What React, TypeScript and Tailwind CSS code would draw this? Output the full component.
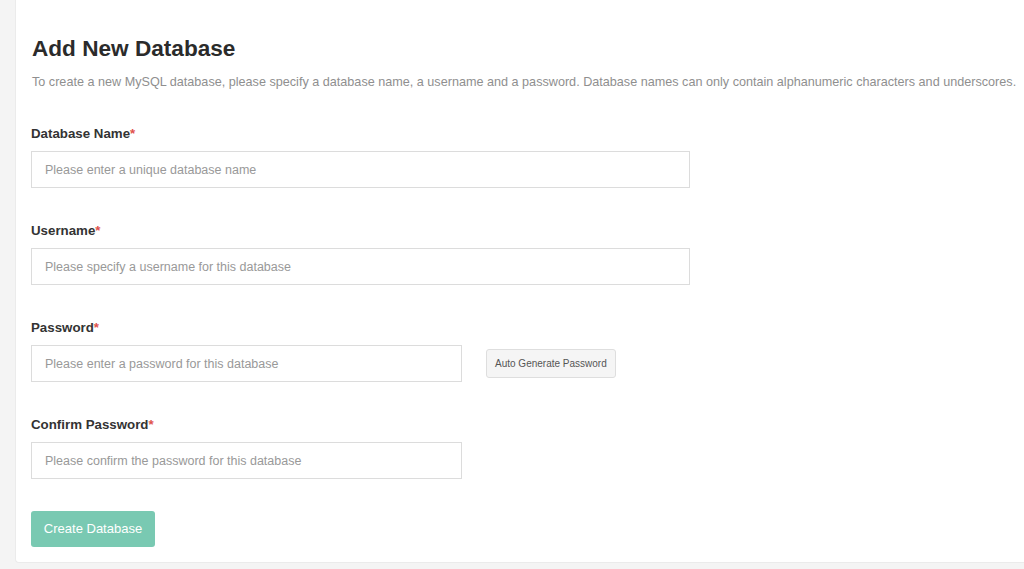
import React from 'react';

const font = { fontFamily: '"Liberation Sans", Arial, sans-serif' };

function Field({ label, placeholder, wide = true, extra }: { label: string; placeholder: string; wide?: boolean; extra?: React.ReactNode }) {
  return (
    <div className="mb-[34px]">
      <label className="block text-[13.3px] font-bold text-[#333] leading-[18px] mb-[8px]">
        {label}
        <span className="text-[#e0524c]">*</span>
      </label>
      <div className="flex items-center">
        <input
          type="text"
          placeholder={placeholder}
          className={
            (wide ? 'w-[659px]' : 'w-[431px]') +
            ' h-[37px] border border-[#dcdcdc] bg-white px-[13px] text-[12.5px] text-[#333] placeholder:text-[#999] outline-none'
          }
        />
        {extra}
      </div>
    </div>
  );
}

export default function App() {
  return (
    <div className="w-[1024px] h-[569px] bg-[#f4f4f4] overflow-hidden" style={font}>
      <div className="ml-[15px] h-[563px] bg-white rounded-bl-[4px] border-l border-b border-[#ebebeb] pl-[15px] pt-[35px]">
        <h1 className="text-[22.6px] font-bold text-[#2b2b2b] leading-[28px] ml-[1px]">Add New Database</h1>
        <p className="mt-[10px] ml-[1px] text-[12.63px] text-[#8f8f8f] leading-[18px] whitespace-nowrap">
          To create a new MySQL database, please specify a database name, a username and a password. Database names can only contain alphanumeric characters and underscores.
        </p>
        <div className="mt-[34px]">
          <Field label="Database Name" placeholder="Please enter a unique database name" />
          <Field label="Username" placeholder="Please specify a username for this database" />
          <Field
            label="Password"
            placeholder="Please enter a password for this database"
            wide={false}
            extra={
              <button className="ml-[24px] h-[29px] px-[8px] rounded-[3px] border border-[#dedede] bg-[#f5f5f5] text-[10px] text-[#555]">
                Auto Generate Password
              </button>
            }
          />
          <Field label="Confirm Password" placeholder="Please confirm the password for this database" wide={false} />
        </div>
        <button className="-mt-[2px] h-[36px] w-[124px] rounded-[3px] bg-[#79c9b2] text-[13px] text-white">
          Create Database
        </button>
      </div>
    </div>
  );
}
